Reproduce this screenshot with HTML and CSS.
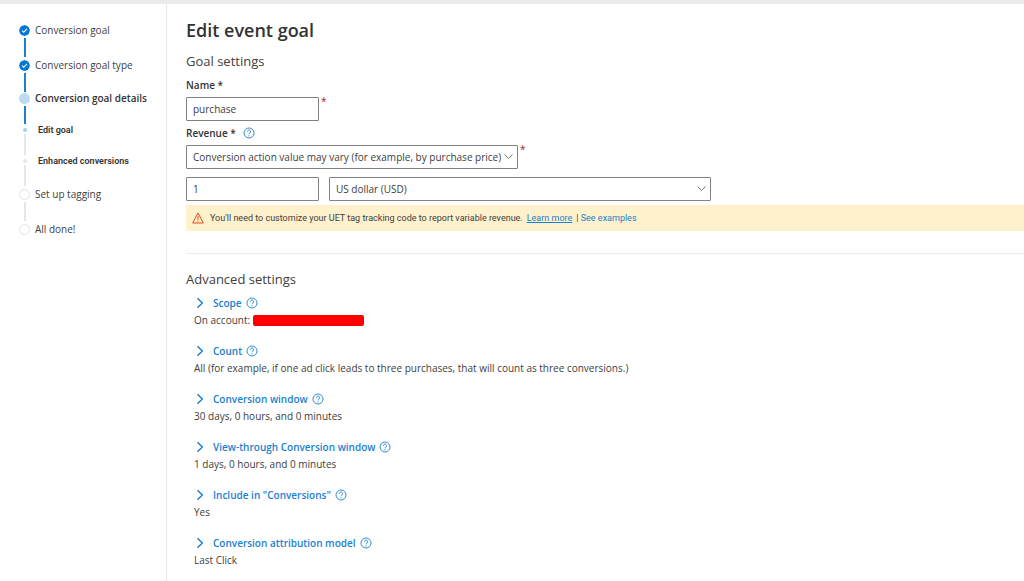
FILE: index.html
```html
<!DOCTYPE html>
<html lang="en">

<head>
    <meta charset="UTF-8">
    <meta name="viewport" content="width=device-width, initial-scale=1.0">
    <title>Edit event goal</title>
    <link rel="stylesheet" href="styles.css">
</head>

<body>
    <!-- Shared icons -->
    <svg class="sprite" aria-hidden="true">
        <symbol id="help" viewBox="0 0 12 12">
            <circle cx="6" cy="6" r="5" fill="none" stroke="currentColor" stroke-width="0.9" />
            <path d="M4.4 4.7a1.6 1.6 0 1 1 2.5 1.3C6.2 6.4 6 6.7 6 7.3" fill="none" stroke="currentColor" stroke-width="0.9" />
            <circle cx="6" cy="8.8" r="0.6" fill="currentColor" />
        </symbol>
        <symbol id="chevron" viewBox="0 0 8 12">
            <path d="M1.5 1.2 6.3 6l-4.8 4.8" fill="none" stroke="currentColor" stroke-width="1.4" />
        </symbol>
        <symbol id="check" viewBox="0 0 12 12">
            <circle cx="6" cy="6" r="5.9" fill="#0078d4" />
            <path d="M3.3 6.2l1.8 1.8 3.7-3.8" fill="none" stroke="#fff" stroke-width="1.2" />
        </symbol>
    </svg>

    <div class="topbar"></div>

    <div class="layout">
        <nav class="sidebar" aria-label="Progress">
            <ol class="steps">
                <li class="step done">
                    <div class="track"><svg class="dot"><use href="#check" /></svg></div>
                    <span class="step-name">Conversion goal</span>
                </li>
                <li class="step done">
                    <div class="track"><svg class="dot"><use href="#check" /></svg></div>
                    <span class="step-name">Conversion goal type</span>
                </li>
                <li class="step current">
                    <div class="track"><span class="dot"></span></div>
                    <span class="step-name">Conversion goal details</span>
                </li>
                <li class="step sub active">
                    <div class="track"><span class="dot"></span></div>
                    <span class="step-name">Edit goal</span>
                </li>
                <li class="step sub">
                    <div class="track"><span class="dot"></span></div>
                    <span class="step-name">Enhanced conversions</span>
                </li>
                <li class="step">
                    <div class="track"><span class="dot"></span></div>
                    <span class="step-name">Set up tagging</span>
                </li>
                <li class="step">
                    <div class="track"><span class="dot"></span></div>
                    <span class="step-name">All done!</span>
                </li>
            </ol>
        </nav>

        <main class="content">
            <h1>Edit event goal</h1>

            <form class="goal-form">
                <h2>Goal settings</h2>
                <label class="label" for="name">Name *</label>
                <div class="row">
                    <input class="field short" type="text" id="name" value="purchase">
                    <span class="required">*</span>
                </div>

                <div class="label">
                    <label for="revenue">Revenue *</label>
                    <svg class="help"><use href="#help" /></svg>
                </div>
                <div class="row">
                    <select class="field revenue" id="revenue">
                        <option>Conversion action value may vary (for example, by purchase price)</option>
                    </select>
                    <span class="required">*</span>
                </div>
                <div class="row amount">
                    <input class="field short" type="text" value="1" aria-label="Value">
                    <select class="field currency" aria-label="Currency">
                        <option>US dollar (USD)</option>
                    </select>
                </div>
            </form>

            <div class="notice">
                <svg class="warning" viewBox="0 0 12 12">
                    <path d="M6 1 11.3 11H.7z" fill="none" stroke="#d83b01" stroke-width="0.9" stroke-linejoin="round" />
                    <path d="M6 4.2v3.6M6 8.7v1" stroke="#d83b01" stroke-width="0.9" />
                </svg>
                <span>You'll need to customize your UET tag tracking code to report variable revenue.</span>
                <a class="learn" href="#">Learn more</a>
                <span class="examples">| <a href="#">See examples</a></span>
            </div>

            <section class="advanced">
                <h2>Advanced settings</h2>

                <div class="setting">
                    <div class="setting-head">
                        <button type="button"><svg class="chevron"><use href="#chevron" /></svg>Scope</button>
                        <svg class="help"><use href="#help" /></svg>
                    </div>
                    <p>On account: <span class="redacted"></span></p>
                </div>
                <div class="setting">
                    <div class="setting-head">
                        <button type="button"><svg class="chevron"><use href="#chevron" /></svg>Count</button>
                        <svg class="help"><use href="#help" /></svg>
                    </div>
                    <p>All (for example, if one ad click leads to three purchases, that will count as three conversions.)</p>
                </div>
                <div class="setting">
                    <div class="setting-head">
                        <button type="button"><svg class="chevron"><use href="#chevron" /></svg>Conversion window</button>
                        <svg class="help"><use href="#help" /></svg>
                    </div>
                    <p>30 days, 0 hours, and 0 minutes</p>
                </div>
                <div class="setting">
                    <div class="setting-head">
                        <button type="button"><svg class="chevron"><use href="#chevron" /></svg>View-through Conversion window</button>
                        <svg class="help"><use href="#help" /></svg>
                    </div>
                    <p>1 days, 0 hours, and 0 minutes</p>
                </div>
                <div class="setting">
                    <div class="setting-head">
                        <button type="button"><svg class="chevron"><use href="#chevron" /></svg>Include in "Conversions"</button>
                        <svg class="help"><use href="#help" /></svg>
                    </div>
                    <p>Yes</p>
                </div>
                <div class="setting">
                    <div class="setting-head">
                        <button type="button"><svg class="chevron"><use href="#chevron" /></svg>Conversion attribution model</button>
                        <svg class="help"><use href="#help" /></svg>
                    </div>
                    <p>Last Click</p>
                </div>
            </section>
        </main>
    </div>
</body>

</html>
```
FILE: styles.css
```css
* {
    margin: 0;
    padding: 0;
    box-sizing: border-box;
}

body {
    display: flex;
    flex-direction: column;
    min-height: 100vh;
    background-color: #fff;
    font-family: 'Segoe UI', 'Open Sans', sans-serif;
    font-size: 10px;
    line-height: 16px;
    color: #404040;
}

a {
    color: #1a80d0;
    text-decoration: none;
}

.sprite {
    display: none;
}

.topbar {
    height: 4px;
    background-color: #ebebeb;
}

.layout {
    display: flex;
    flex: 1;
}

/* Progress steps */
.sidebar {
    flex: none;
    width: 167px;
    padding: 18px 0 0 19px;
    border-right: 1px solid #e8e8e8;
}

.steps {
    list-style: none;
}

.step {
    display: flex;
    gap: 5px;
    height: 35px;
    line-height: 16px;
}

.track {
    display: flex;
    flex-direction: column;
    align-items: center;
    width: 11px;
    padding-top: 3px;
}

.dot {
    flex: none;
    width: 11px;
    height: 11px;
    border: 1px solid #e4e4e4;
    border-radius: 50%;
}

.done .dot {
    border: none;
}

.track::after {
    content: "";
    flex: 1;
    width: 2px;
    margin-top: 2px;
    background-color: #e6e6e6;
}

.step:last-child .track::after {
    display: none;
}

.done .track::after,
.current .track::after {
    background-color: #1a80d0;
}

.current {
    height: 32px;
    line-height: 12px;
    font-weight: 600;
    color: #333;
}

.current .track {
    padding-top: 1px;
}

.current .dot {
    border: none;
    background-color: #bcdcf4;
}

.sub {
    gap: 8px;
    height: 31px;
    line-height: 12px;
    font-family: 'Segoe UI', Roboto, sans-serif;
    font-size: 9px;
    font-weight: 600;
    color: #333;
}

.sub .track {
    padding-top: 4px;
}

.sub .dot {
    width: 4px;
    height: 4px;
    border: none;
    background-color: #e6e6e6;
}

.active .dot {
    background-color: #a6d0f0;
}

/* Goal form */
.content {
    flex: 1;
    min-width: 0;
    padding: 12px 0 12px 19px;
}

h1 {
    font-size: 18px;
    font-weight: 600;
    line-height: 28px;
    color: #333;
}

h2 {
    font-size: 13px;
    font-weight: 400;
    line-height: 20px;
}

.goal-form h2 {
    margin: 7px 0 6px;
}

.label {
    display: flex;
    align-items: center;
    gap: 7px;
    height: 16px;
    font-weight: 600;
    color: #333;
}

.row {
    display: flex;
    gap: 2px;
    margin: 4px 0;
}

.amount {
    gap: 10px;
    margin-top: 8px;
}

.field {
    height: 24px;
    padding: 0 6px;
    border: 1px solid #808080;
    border-radius: 1px;
    background-color: #fff;
    font-family: inherit;
    font-size: 10px;
    color: #404040;
}

select.field {
    appearance: none;
    background-image: url("data:image/svg+xml,%3Csvg xmlns='http://www.w3.org/2000/svg' width='9' height='6'%3E%3Cpath d='M.5.5l4 4 4-4' fill='none' stroke='%23767676'/%3E%3C/svg%3E");
    background-repeat: no-repeat;
    background-position: right 4px center;
}

.short {
    width: 133px;
}

.revenue {
    width: 332px;
}

.currency {
    width: 382px;
}

.required {
    line-height: 8px;
    color: #a4262c;
}

.help {
    flex: none;
    width: 12px;
    height: 12px;
    color: #1a80d0;
}

.notice {
    display: flex;
    align-items: center;
    height: 26px;
    padding-left: 6px;
    background-color: #fff1cc;
    font-family: 'Segoe UI', Roboto, sans-serif;
    font-size: 9px;
}

.warning {
    width: 12px;
    height: 12px;
    margin-right: 6px;
}

.learn {
    margin: 0 4px;
    text-decoration: underline;
}

/* Advanced settings */
.advanced {
    margin-top: 22px;
    padding-top: 15px;
    border-top: 1px solid #ebebeb;
}

.setting {
    padding-left: 8px;
    margin-top: 14px;
}

.advanced h2 + .setting {
    margin-top: 6px;
}

.setting-head {
    display: flex;
    align-items: center;
    gap: 4px;
    height: 16px;
}

.setting-head button {
    display: flex;
    align-items: center;
    gap: 9px;
    padding-left: 2px;
    border: none;
    background: none;
    font: inherit;
    font-weight: 600;
    color: #1a80d0;
    cursor: pointer;
}

.chevron {
    width: 8px;
    height: 12px;
}

.setting p {
    display: flex;
    align-items: center;
    gap: 3px;
    line-height: 18px;
}

.redacted {
    width: 111px;
    height: 11px;
    border-radius: 2px;
    background-color: #f00;
}
```
